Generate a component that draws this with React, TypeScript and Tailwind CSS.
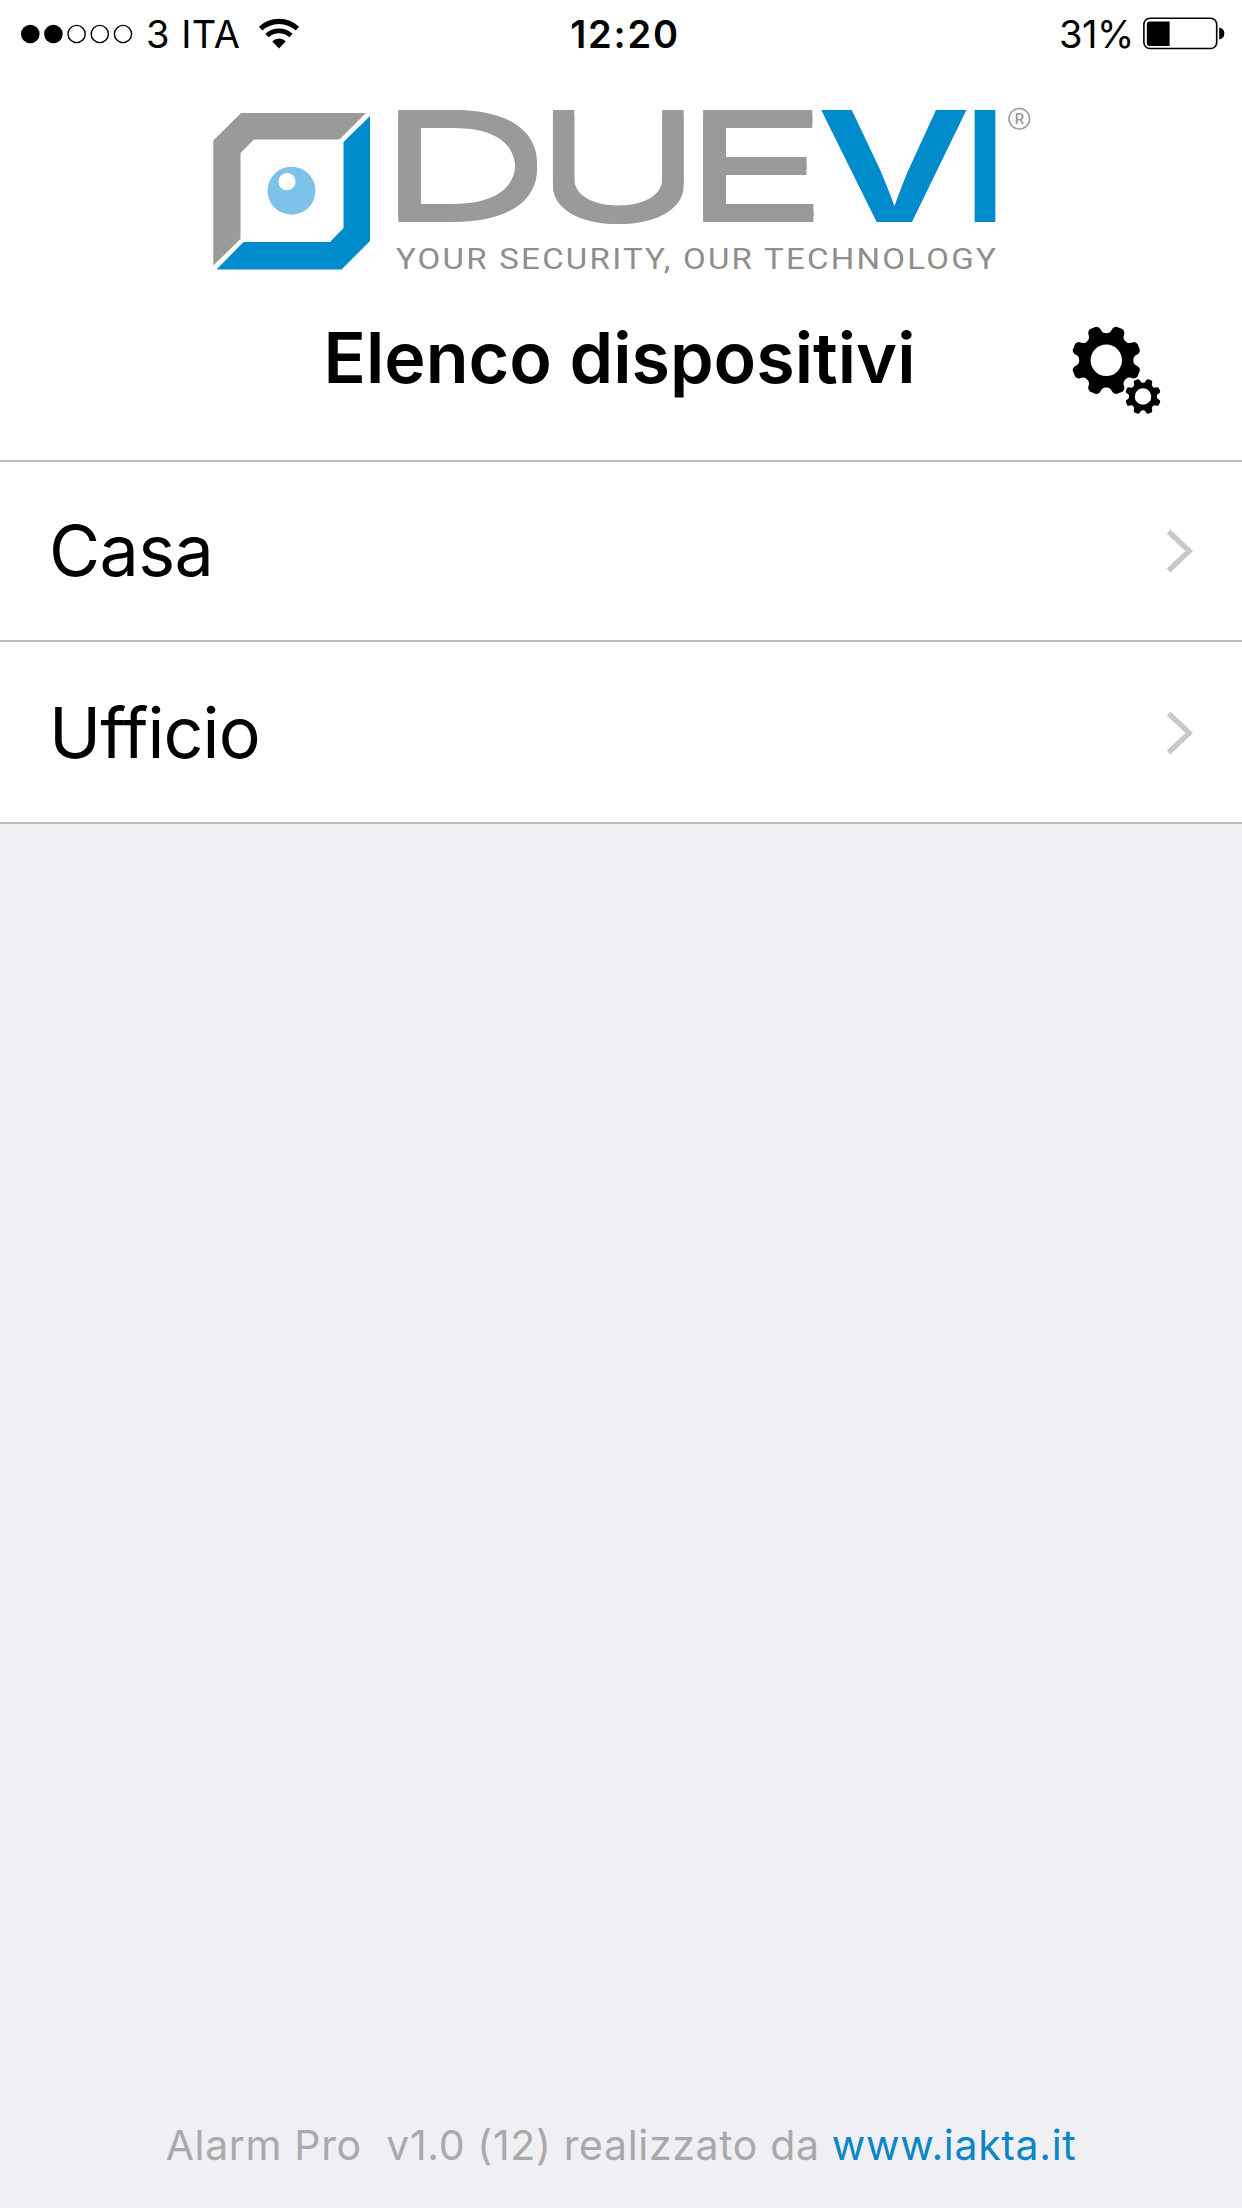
import React from "react";

const FONT = "font-['Inter','Liberation_Sans',sans-serif]";

function point(cx: number, cy: number, r: number, deg: number) {
  const a = ((deg - 90) * Math.PI) / 180;
  return `${(cx + r * Math.cos(a)).toFixed(2)} ${(cy + r * Math.sin(a)).toFixed(2)}`;
}

// Eight-tooth cog with a round hole; `s` is the outer radius.
function cog(cx: number, cy: number, s: number, hole: number) {
  const p = (r: number, d: number) => point(cx, cy, r * s, d);
  let d = `M${p(0.77, 0)}`;
  for (let k = 0; k < 8; k++) {
    const a = 22.5 + k * 45;
    d += `C${p(0.77, a - 15)} ${p(0.84, a - 13)} ${p(0.92, a - 11.5)}`;
    d += `Q${p(0.98, a - 10)} ${p(1, a - 5.5)}L${p(1, a + 5.5)}`;
    d += `Q${p(0.98, a + 10)} ${p(0.92, a + 11.5)}`;
    d += `C${p(0.84, a + 13)} ${p(0.77, a + 15)} ${p(0.77, a + 22.5)}`;
  }
  d += `ZM${cx - hole} ${cy}a${hole} ${hole} 0 1 0 ${hole * 2} 0a${hole} ${hole} 0 1 0 ${-hole * 2} 0Z`;
  return d;
}

function SignalDots() {
  return (
    <svg width="114" height="22" viewBox="20 22.5 114 22">
      {[30.3, 53.4, 76.6, 99.8, 123].map((x, i) => (
        <circle key={x} cx={x} cy="33.5" r={i < 2 ? 9.3 : 8.6} fill={i < 2 ? "#000" : "none"} stroke="#000" strokeWidth={i < 2 ? 0 : 1.4} />
      ))}
    </svg>
  );
}

function Wifi() {
  return (
    <svg width="42" height="32" viewBox="258 17 42 32" fill="none" stroke="#000">
      <path d="M260.6 27.7A27 27 0 0 1 297.4 27.7" strokeWidth="5.2" />
      <path d="M267 34.6A17.5 17.5 0 0 1 291 34.6" strokeWidth="4.8" />
      <path d="M279 47.5L272.2 40.2A10 10 0 0 1 285.8 40.2Z" fill="#000" stroke="none" />
    </svg>
  );
}

function Battery() {
  return (
    <svg width="82" height="33" viewBox="1143 17 82 33">
      <rect x="1143.9" y="18.3" width="72.8" height="30.2" rx="6" fill="none" stroke="#000" strokeWidth="1.6" />
      <path d="M1150 21.5H1169.6V46H1150Q1146.8 46 1146.8 42.8V24.7Q1146.8 21.5 1150 21.5Z" />
      <path d="M1219.2 27.5Q1224.3 28.5 1224.3 33.5T1219.2 39.5Z" />
    </svg>
  );
}

function Logo() {
  const gray = "text-[146px] font-normal [filter:drop-shadow(0_-6px_0_#9b9a98)]";
  const letters = [
    { c: "D", x: 377, w: 174.5, fill: "#9b9a98", style: gray },
    { c: "U", x: 532.7, w: 171, fill: "#9b9a98", style: gray },
    { c: "E", x: 681.5, w: 148, fill: "#9b9a98", style: gray },
    { c: "V", x: 816, w: 155.6, fill: "#008ccc", style: "text-[154px] font-semibold" },
    { c: "I", x: 955, w: 60, fill: "#008ccc", style: "text-[154px] font-normal" },
  ];
  return (
    <svg width="822" height="213" viewBox="210 67 822 213">
      <path fill="#9b9a98" d="M213.3 140.5L241 113H366L339.5 139.5H254L240.5 153V239L213.3 265.5Z" />
      <path fill="#008ccc" d="M370 116V241L341.5 269.5H216.5L243.5 242H330L343.5 228V142Z" />
      <circle cx="291.5" cy="190.7" r="24" fill="#7dc2e8" />
      <circle cx="287" cy="181.7" r="8.6" fill="#fff" />
      {letters.map((l) => (
        <text key={l.c} x={l.x} y="222.3" textLength={l.w} lengthAdjust="spacingAndGlyphs" fill={l.fill} className={`font-['Inter',sans-serif] ${l.style}`}>
          {l.c}
        </text>
      ))}
      <text x="396" y="269" textLength="602" lengthAdjust="spacingAndGlyphs" fill="#8f8e8d" className="font-['Roboto',sans-serif] text-[29.5px] tracking-[2px]">
        YOUR SECURITY, OUR TECHNOLOGY
      </text>
      <circle cx="1019.3" cy="118.7" r="10.3" fill="none" stroke="#9b9a98" strokeWidth="1.5" />
      <text x="1019.5" y="124" textAnchor="middle" fill="#9b9a98" className="font-['Roboto',sans-serif] text-[15px] font-medium">
        R
      </text>
    </svg>
  );
}

function Row({ label, className }: { label: string; className: string }) {
  return (
    <li className={`flex items-center justify-between border-b-2 border-[#bdbdc0] bg-white pr-[48px] pl-[49px] text-[70px] leading-none ${className}`}>
      <span>{label}</span>
      <svg width="28" height="46" viewBox="0 0 28 46" fill="none" stroke="#c7c7cc" strokeWidth="5.2">
        <path d="M2.5 3.5L23.3 23L2.5 42.5" />
      </svg>
    </li>
  );
}

export default function App() {
  return (
    <div className={`flex h-[2208px] w-[1242px] flex-col bg-[#efeff4] text-black ${FONT}`}>
      <header className="flex h-[462px] flex-col border-b-2 border-[#bdbdc0] bg-white">
        <div className="grid h-[67px] grid-cols-3 items-center pr-[17px] pl-[20px] text-[38px] leading-none">
          <div className="flex items-center">
            <SignalDots />
            <span className="ml-[12px] w-[112px] whitespace-nowrap tracking-[0.5px]">3 ITA</span>
            <Wifi />
          </div>
          <span className="pl-[5px] text-center font-semibold tracking-[1.8px]">12:20</span>
          <div className="flex items-center justify-end gap-[9px]">
            <span className="tracking-[-0.4px]">31%</span>
            <Battery />
          </div>
        </div>
        <div className="flex justify-center">
          <Logo />
        </div>
        <div className="mt-[36px] grid grid-cols-[1fr_auto_1fr] items-start">
          <span />
          <h1 className="mt-[7px] pr-[3px] text-[70px] leading-none font-semibold whitespace-nowrap">Elenco dispositivi</h1>
          <svg width="92" height="92" viewBox="1070 322 92 92" className="mt-[6px] mr-[80px] justify-self-end">
            <path fillRule="evenodd" d={cog(1106.3, 360.3, 35.2, 15.7)} />
            <path fillRule="evenodd" d={cog(1143, 396.5, 18, 8.3)} />
          </svg>
        </div>
      </header>
      <ul>
        <Row label="Casa" className="h-[180px] tracking-[-0.6px]" />
        <Row label="Ufficio" className="h-[182px] pt-[2px] tracking-[-0.9px]" />
      </ul>
      <footer className="mt-auto mb-[43px] text-center text-[41px] leading-[40px] tracking-[0.65px] whitespace-pre text-[#a9a9ab]">
        Alarm Pro{"  "}v1.0 (12) realizzato da <a className="text-[#0a86c4]">www.iakta.it</a>
      </footer>
    </div>
  );
}
